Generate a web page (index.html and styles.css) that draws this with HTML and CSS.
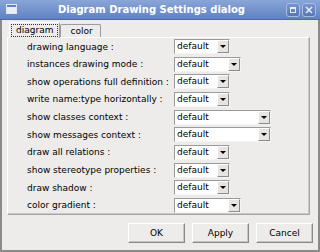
FILE: index.html
```html
<!DOCTYPE html>
<html>
<head>
<meta charset="utf-8">
<link rel="stylesheet" href="styles.css">
</head>
<body>
<div class="window">
  <div class="titlebar">
    <svg class="appicon" width="11" height="10" viewBox="0 0 11 10">
      <rect x="0.5" y="0.5" width="10" height="9" fill="#e8eef8" stroke="#dfe7f5"/>
      <rect x="1" y="1" width="9" height="2" fill="#5f82c2"/>
    </svg>
    <div class="title">Diagram Drawing Settings dialog</div>
    <div class="wbtns">
      <div class="wbtn">
        <svg width="12" height="12" viewBox="0 0 12 12"><rect x="3.5" y="3.5" width="5" height="5" fill="none" stroke="#e6ecf8" stroke-width="1"/><rect x="3.5" y="3.5" width="5" height="1.5" fill="#e6ecf8"/></svg>
      </div>
      <div class="wbtn">
        <svg width="12" height="12" viewBox="0 0 12 12"><path d="M3 3 L9 9 M9 3 L3 9" stroke="#e6ecf8" stroke-width="1.6"/></svg>
      </div>
    </div>
  </div>
  <div class="body">
    <div class="tabs">
      <div class="tab active"><span class="focus">diagram</span></div>
      <div class="tab">color</div>
    </div>
    <div class="pane">
      <div class="row"><span class="lbl">drawing language :</span><div class="combo w56"><span class="val">default</span><span class="arrow"></span></div></div>
      <div class="row"><span class="lbl">instances drawing mode :</span><div class="combo w67"><span class="val">default</span><span class="arrow"></span></div></div>
      <div class="row"><span class="lbl">show operations full definition :</span><div class="combo w56"><span class="val">default</span><span class="arrow"></span></div></div>
      <div class="row"><span class="lbl">write name:type horizontally :</span><div class="combo w56"><span class="val">default</span><span class="arrow"></span></div></div>
      <div class="row"><span class="lbl">show classes context :</span><div class="combo w97"><span class="val">default</span><span class="arrow"></span></div></div>
      <div class="row"><span class="lbl">show messages context :</span><div class="combo w97"><span class="val">default</span><span class="arrow"></span></div></div>
      <div class="row"><span class="lbl">draw all relations :</span><div class="combo w56"><span class="val">default</span><span class="arrow"></span></div></div>
      <div class="row"><span class="lbl">show stereotype properties :</span><div class="combo w56"><span class="val">default</span><span class="arrow"></span></div></div>
      <div class="row"><span class="lbl">draw shadow :</span><div class="combo w56"><span class="val">default</span><span class="arrow"></span></div></div>
      <div class="row"><span class="lbl">color gradient :</span><div class="combo w67"><span class="val">default</span><span class="arrow"></span></div></div>
    </div>
    <div class="buttons">
      <div class="btn">OK</div>
      <div class="btn">Apply</div>
      <div class="btn">Cancel</div>
    </div>
  </div>
</div>
</body>
</html>
```
FILE: styles.css
```css
html, body { margin: 0; padding: 0; }
body { width: 320px; height: 252px; overflow: hidden; background: #ebe9e7; font-family: "DejaVu Sans", sans-serif; }
.window { width: 320px; height: 252px; box-sizing: border-box; border-bottom: 2px solid #8a8a8a; display: flex; flex-direction: column; background: #edecea; }
.titlebar { height: 20px; flex: none; display: flex; align-items: center; background: linear-gradient(#8aa6d8, #5f82c2); border-bottom: 1px solid #4d6aa6; padding: 0 4px 0 6px; box-sizing: border-box; }
.appicon { flex: none; margin-top: -1px; }
.title { flex: 1; text-align: center; color: #fff; font-weight: bold; font-size: 10px; }
.wbtns { display: flex; gap: 2px; }
.wbtn { width: 14px; height: 14px; border: 1px solid #a9bde3; border-radius: 3px; background: linear-gradient(#7795cd, #5675b6); box-sizing: border-box; display: flex; align-items: center; justify-content: center; }
.body { flex: 1; padding: 2px 8px 0 5px; display: flex; flex-direction: column; border-left: 2px solid #8a8a8a; border-right: 2px solid #8a8a8a; }
.tabs { display: flex; height: 15px; padding-left: 2px; position: relative; z-index: 1; }
.tab { font-size: 9px; color: #000; border: 1px solid #9c9c9c; border-bottom: none; border-radius: 2px 2px 0 0; background: #edecea; padding: 0 7px 0 9px; line-height: 12px; margin-top: 2px; }
.tab.active { margin-top: 0; height: 16px; padding: 1px 1px 0 1px; border-left-color: #fff; border-top-color: #fff; box-sizing: border-box; }
.focus { display: inline-block; border: 1px dotted #333; padding: 0 4px 0 4px; line-height: 11px; }
.pane { border: 1px solid #a5a5a5; border-top-color: #fff; border-left-color: #fff; box-shadow: -1px -1px 0 #c8c8c8 inset; height: 178px; box-sizing: border-box; padding: 1px 0 0 19px; display: flex; flex-direction: column; gap: 2.67px; }
.row { display: flex; align-items: center; height: 15px; }
.lbl { width: 147px; font-size: 9px; color: #000; white-space: nowrap; }
.combo { height: 15px; box-sizing: border-box; border: 1px solid; border-color: #9a9a9a #f4f4f4 #f4f4f4 #9a9a9a; background: #fff; display: flex; align-items: stretch; }
.val { flex: 1; font-size: 9px; line-height: 13px; padding-left: 2px; }
.arrow { width: 12px; background: #e6e5e3; border: 1px solid; border-color: #fff #8c8c8c #8c8c8c #fff; box-sizing: border-box; position: relative; }
.arrow::after { content: ""; position: absolute; left: 2px; top: 4px; border-left: 3px solid transparent; border-right: 3px solid transparent; border-top: 3px solid #000; }
.w56 { width: 56px; }
.w67 { width: 67px; }
.w97 { width: 97px; }
.buttons { display: flex; justify-content: flex-end; gap: 7px; margin-top: 8px; margin-right: -3px; }
.btn { width: 57px; height: 20px; box-sizing: border-box; border: 1px solid; border-color: #fff #888 #888 #fff; box-shadow: inset -1px -1px 0 #c4c4c4; font-size: 9px; text-align: center; line-height: 18px; color: #000; background: #edecea; }
```
